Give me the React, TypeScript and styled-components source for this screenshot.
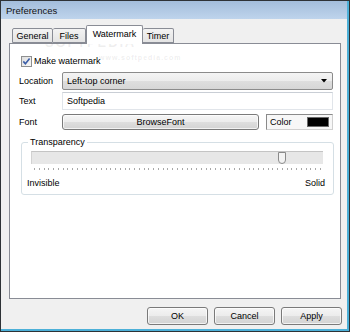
import styled, { createGlobalStyle } from "styled-components";

const GlobalStyle = createGlobalStyle`
  html, body {
    margin: 0;
    padding: 0;
    background: #f0f0f0;
  }
  body {
    font-family: "Liberation Sans", Arial, sans-serif;
    font-size: 9px;
    color: #000;
  }
`;

const tabs = [
  { label: "General", width: 41 },
  { label: "Files", width: 33 },
  { label: "Watermark", width: 57 },
  { label: "Timer", width: 31 },
];

const transparency = 87;
const tickCount = 61;

const Window = styled.div`
  position: relative;
  width: 350px;
  height: 332px;
  box-sizing: border-box;
  border: 1px solid #2e3236;
  display: flex;
  overflow: hidden;
`;

const Frame = styled.div`
  flex: 1;
  min-width: 0;
  display: flex;
  flex-direction: column;
  background: #f0f0f0;
  border-right: 2px solid #4cb0d8;
  border-bottom: 2px solid #4cb0d8;
`;

const TitleBar = styled.div`
  flex: none;
  height: 18px;
  display: flex;
  align-items: center;
  padding-left: 5px;
  background: linear-gradient(#a3bddb, #bed4ec);
  font-size: 9.5px;
  color: #111;
`;

const Client = styled.div`
  flex: 1;
  display: flex;
  flex-direction: column;
  padding: 6px 6px 0 8px;
`;

const TabStrip = styled.div`
  position: relative;
  z-index: 1;
  display: flex;
  align-items: flex-end;
  height: 19px;
  margin-bottom: -1px;
  padding-left: 3px;
`;

const Tab = styled.div<{ $active?: boolean; $w: number }>`
  box-sizing: border-box;
  width: ${(p) => p.$w}px;
  height: ${(p) => (p.$active ? 19 : 15)}px;
  margin-bottom: ${(p) => (p.$active ? 0 : 1)}px;
  display: flex;
  align-items: center;
  justify-content: center;
  padding-bottom: ${(p) => (p.$active ? 2 : 0)}px;
  border: 1px solid #898c95;
  border-bottom: ${(p) => (p.$active ? "none" : "1px solid #898c95")};
  border-left-width: ${(p) => (p.$active ? 1 : 0)}px;
  border-radius: 2px 2px 0 0;
  background: ${(p) =>
    p.$active ? "#fff" : "linear-gradient(#f3f3f3, #e4e4e4)"};
  &:first-child {
    border-left-width: 1px;
  }
`;

const Panel = styled.div`
  box-sizing: border-box;
  height: 256px;
  border: 1px solid #898c95;
  background: #fff;
  padding: 10px 7px 0 9px;
`;

const CheckRow = styled.label`
  display: flex;
  align-items: center;
  gap: 2px;
  height: 14px;
  padding-left: 2px;
  margin-bottom: 4px;
`;

const Form = styled.div`
  display: grid;
  grid-template-columns: 43px 1fr;
  grid-template-rows: 18px 18px 20px;
  row-gap: 2px;
  align-items: center;
`;

const Label = styled.span`
  line-height: 11px;
`;

const Combo = styled.div`
  box-sizing: border-box;
  height: 18px;
  display: flex;
  align-items: center;
  justify-content: space-between;
  padding: 0 5px 0 4px;
  border: 1px solid #8b8b8b;
  border-radius: 2px;
  background: linear-gradient(#f4f4f4 0%, #ececec 50%, #dedede 51%, #d6d6d6 100%);
`;

const TextBox = styled.div`
  box-sizing: border-box;
  height: 18px;
  display: flex;
  align-items: center;
  padding-left: 4px;
  border: 1px solid #e1e5ea;
  border-top-color: #c9ced5;
  background: #fff;
`;

const FontRow = styled.div`
  display: flex;
  gap: 7px;
  height: 16px;
`;

const PushButton = styled.button<{ $w?: number; $h?: number }>`
  box-sizing: border-box;
  ${(p) => (p.$w ? `width: ${p.$w}px; flex: none;` : "flex: 1;")}
  height: ${(p) => p.$h ?? 16}px;
  padding: 0;
  font: inherit;
  color: #000;
  border: 1px solid #7a7a7a;
  border-radius: 3px;
  background: linear-gradient(#f5f5f5 0%, #ececec 50%, #dedede 51%, #d3d3d3 100%);
  box-shadow: inset 0 0 0 1px rgba(255, 255, 255, 0.7);
`;

const ColorBox = styled.div`
  box-sizing: border-box;
  width: 67px;
  flex: none;
  display: flex;
  align-items: center;
  justify-content: space-between;
  padding: 0 3px 0 3px;
  border: 1px solid #8a8a8a;
  border-right-color: #d0d0d0;
  border-bottom-color: #d0d0d0;
  background: #f7f7f7;
`;

const Swatch = styled.div<{ $color: string }>`
  width: 20px;
  height: 8px;
  background: ${(p) => p.$color};
  border: 1px solid #6a6a6a;
`;

const Group = styled.fieldset`
  margin: 5px -1px 0 2px;
  padding: 4px 10px 5px 9px;
  border: 1px solid #d5dfe5;
  border-radius: 3px;
  min-width: 0;
`;

const Legend = styled.legend`
  padding: 0 2px;
  margin-left: -3px;
  line-height: 10px;
`;

const Track = styled.div`
  position: relative;
  box-sizing: border-box;
  height: 13px;
  background: #e7e7e7;
  border-top: 1px solid #c4c4c4;
  border-left: 1px solid #d2d2d2;
`;

const Thumb = styled.svg`
  position: absolute;
  top: 0;
  display: block;
`;

const Ticks = styled.svg`
  display: block;
  margin-top: 4px;
`;

const Scale = styled.div`
  display: flex;
  justify-content: space-between;
  margin: 7px -2px 0 -4px;
  line-height: 11px;
`;

const Footer = styled.div`
  display: flex;
  justify-content: flex-end;
  gap: 6px;
  padding-top: 8px;
  margin-right: -1px;
`;

const Stamp = styled.div<{ $size: number }>`
  position: absolute;
  font-size: ${(p) => p.$size}px;
  font-weight: bold;
  letter-spacing: ${(p) => p.$size / 7}px;
  color: rgba(120, 120, 120, 0.12);
  pointer-events: none;
  white-space: nowrap;
`;

function CheckBox() {
  return (
    <svg width="11" height="11" viewBox="0 0 11 11">
      <defs>
        <linearGradient id="cb" x1="0" y1="0" x2="1" y2="1">
          <stop offset="0" stopColor="#dcdcdc" />
          <stop offset="1" stopColor="#fafafa" />
        </linearGradient>
      </defs>
      <rect x="0.5" y="0.5" width="10" height="10" fill="url(#cb)" stroke="#8e8f8f" />
      <path d="M2.3 5.4 L4.4 7.8 L8.6 2.6" fill="none" stroke="#3b5ea8" strokeWidth="1.6" />
    </svg>
  );
}

export default function App() {
  const trackWidth = 292;
  const thumbLeft = Math.round(((trackWidth - 10) * transparency) / 100) + 5 - 4;
  const ticks = Array.from({ length: tickCount }, (_, i) =>
    Math.round(3 + (i * 286) / (tickCount - 1)) + 0.5
  );

  return (
    <>
      <GlobalStyle />
      <Window>
        <Frame>
          <TitleBar>Preferences</TitleBar>
          <Client>
            <TabStrip>
              {tabs.map((t) => (
                <Tab key={t.label} $w={t.width} $active={t.label === "Watermark"}>
                  {t.label}
                </Tab>
              ))}
            </TabStrip>
            <Panel>
              <CheckRow>
                <CheckBox />
                Make watermark
              </CheckRow>
              <Form>
                <Label>Location</Label>
                <Combo>
                  Left-top corner
                  <svg width="6" height="4" viewBox="0 0 6 4">
                    <path d="M0 0 H6 L3 3.5 Z" fill="#000" />
                  </svg>
                </Combo>
                <Label>Text</Label>
                <TextBox>Softpedia</TextBox>
                <Label>Font</Label>
                <FontRow>
                  <PushButton>BrowseFont</PushButton>
                  <ColorBox>
                    Color
                    <Swatch $color="#000" />
                  </ColorBox>
                </FontRow>
              </Form>
              <Group>
                <Legend>Transparency</Legend>
                <Track>
                  <Thumb
                    width="8"
                    height="12"
                    viewBox="0 0 8 12"
                    style={{ left: thumbLeft }}
                  >
                    <path
                      d="M0.5 0.5 H7.5 V8 Q7.5 11.5 4 11.5 Q0.5 11.5 0.5 8 Z"
                      fill="#f3f3f3"
                      stroke="#8a8a8a"
                    />
                  </Thumb>
                </Track>
                <Ticks width={trackWidth} height="3">
                  {ticks.map((x, i) => (
                    <line key={i} x1={x} y1="0" x2={x} y2="2" stroke="#a8a8a8" />
                  ))}
                </Ticks>
                <Scale>
                  <span>Invisible</span>
                  <span>Solid</span>
                </Scale>
              </Group>
            </Panel>
            <Footer>
              <PushButton $w={61} $h={18}>OK</PushButton>
              <PushButton $w={61} $h={18}>Cancel</PushButton>
              <PushButton $w={61} $h={18}>Apply</PushButton>
            </Footer>
          </Client>
        </Frame>
        <Stamp $size={13} style={{ left: 44, top: 34 }}>SOFTPEDIA</Stamp>
        <Stamp $size={7} style={{ left: 98, top: 53 }}>www.softpedia.com</Stamp>
      </Window>
    </>
  );
}
